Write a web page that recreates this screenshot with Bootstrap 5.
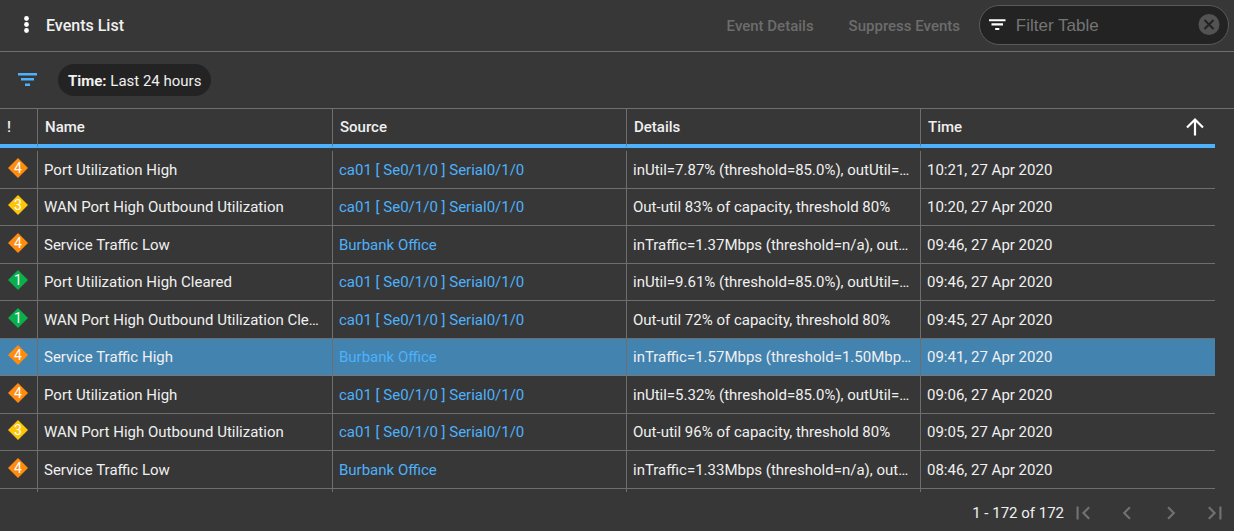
<!DOCTYPE html>
<html lang="en">
<head>
<meta charset="utf-8">
<meta name="viewport" content="width=device-width, initial-scale=1">
<title>Events List</title>
<link href="https://cdn.jsdelivr.net/npm/bootstrap@5.3.0/dist/css/bootstrap.min.css" rel="stylesheet">
<style>
  :root { --line: #6e6e6e; --accent: #4db1fb; --panel: #373737; --well: #232323; }
  body { background: var(--panel); color: #f0f0f0; font-family: Roboto, "Liberation Sans", sans-serif; font-size: 15px; line-height: 20px; }
  .top-bar { height: 52px; border-bottom: 1px solid var(--line); padding: 0 5px 1px 14px; }
  .chip-bar { height: 57px; border-bottom: 1px solid var(--line); padding-left: 15px; }
  .icon-btn { background: none; border: 0; padding: 0; line-height: 0; color: inherit; }
  .title-text { font-size: 16px; font-weight: 500; line-height: 20px; margin-left: 8px; padding-top: 2px; }
  .top-actions { gap: 35px; margin-right: 19px; }
  .action-btn { background: none; border: 0; padding: 2px 0 0; font-size: 15px; font-weight: 500; color: #6c6c6c; }
  .search-pill { width: 250px; height: 40px; background: var(--well); border: 1px solid #5a5a5a; border-radius: 20px; padding: 0 8px 0 9px; }
  .search-pill input { background: none; border: 0; outline: 0; color: #f0f0f0; font-family: "Liberation Sans", sans-serif; font-size: 17px; min-width: 0; padding: 2px 0 0; margin-left: 7px; }
  .search-pill input::placeholder { color: #757575; opacity: 1; }
  .time-chip { height: 32px; border: 0; border-radius: 16px; background: var(--well); color: #f0f0f0; padding: 2px 10px 0; margin-left: 18px; }
  .grid-wrap { padding-right: 19px; }
  .event-table { width: 100%; table-layout: fixed; border-collapse: separate; border-spacing: 0; }
  .event-table th, .event-table td { border-right: 1px solid var(--line); padding: 0 7px 0 6px; overflow: hidden; white-space: nowrap; text-overflow: ellipsis; vertical-align: middle; }
  .event-table th:last-child, .event-table td:last-child { border-right: 0; }
  .event-table th { height: 39px; border-bottom: 4px solid var(--accent); font-weight: 500; padding-left: 7px; }
  .event-table tbody::before { content: ""; display: block; height: 3px; }
  .event-table tbody tr { height: 38px; }
  .event-table tbody tr:nth-child(even) { height: 37px; }
  .event-table tbody td { border-bottom: 1px solid var(--line); }
  .event-table tfoot td { height: 3px; padding: 0; }
  .event-table td.sev { padding: 0 0 4px 8px; line-height: 0; }
  .event-table a { color: var(--accent); text-decoration: none; }
  .event-table .picked td { background: #4383b0; border-bottom-color: #77797b; }
  .sev-col { width: 38px; }
  .name-col { width: 295px; }
  .sev text { font-family: Roboto, sans-serif; font-size: 14px; fill: #fff; text-anchor: middle; }
  .s4 { fill: #ff8c0f; } .s3 { fill: #fdc60b; } .s1 { fill: #09b04c; }
  .pager { padding: 1px 6px 0; height: 40px; }
  .pager-nav { gap: 18px; margin-left: 6px; }
</style>
</head>
<body>
<main class="d-flex flex-column min-vh-100">
  <header class="top-bar d-flex align-items-center">
    <button class="icon-btn" type="button" aria-label="More options">
      <svg width="24" height="24" viewBox="0 0 24 24" fill="#fff"><circle cx="12.500" cy="5.500" r="2.400"/><circle cx="12.500" cy="11.500" r="2.400"/><circle cx="12.500" cy="17.500" r="2.400"/></svg>
    </button>
    <h1 class="title-text mb-0 me-auto">Events List</h1>
    <div class="top-actions d-flex">
      <button class="action-btn" type="button" disabled>Event Details</button>
      <button class="action-btn" type="button" disabled>Suppress Events</button>
    </div>
    <div class="search-pill d-flex align-items-center">
      <svg width="24" height="24" viewBox="0 0 24 24" fill="#fff" aria-hidden="true"><path d="M0 5h20v2.500H0zM3 10h14v2.500H3zM7.500 15.500h5V18h-5z"/></svg>
      <input class="flex-grow-1" type="text" placeholder="Filter Table" aria-label="Filter Table">
      <button class="icon-btn" type="button" aria-label="Clear filter">
        <svg width="22" height="22" viewBox="0 0 22 22"><circle cx="11" cy="10.500" r="10.500" fill="#535353"/><path d="M6.500 6l9 9m0-9l-9 9" stroke="#232323" stroke-width="2"/></svg>
      </button>
    </div>
  </header>

  <section class="chip-bar d-flex align-items-center" aria-label="Active filters">
    <button class="icon-btn" type="button" aria-label="Filters">
      <svg width="25" height="24" viewBox="0 0 25 24" fill="#4db1fb"><path d="M3 5h19v2.500H3zM6 10h13v2.500H6zM10 15.500h5V18h-5z"/></svg>
    </button>
    <button class="time-chip" type="button"><b>Time:</b> Last 24 hours</button>
  </section>

  <div class="grid-wrap">
    <table class="event-table">
      <colgroup><col class="sev-col"><col class="name-col"><col><col><col></colgroup>
      <thead>
        <tr><th scope="col">!</th><th scope="col">Name</th><th scope="col">Source</th><th scope="col">Details</th>
          <th scope="col"><div class="d-flex align-items-center justify-content-between">Time
            <svg width="26" height="22" viewBox="0 0 26 22" fill="none" stroke="#fff" stroke-width="2.200" aria-hidden="true"><path d="M13 19.500V4M5 11.500l8-8 8 8"/></svg></div></th></tr>
      </thead>
      <tbody>
        <tr><td class="sev"><svg width="20" height="20" role="img"><path class="s4" d="M10 0l10 10-10 10L0 10z"/><text x="10" y="15">4</text></svg></td><td>Port Utilization High</td><td><a href="#">ca01 [ Se0/1/0 ] Serial0/1/0</a></td><td>inUtil=7.87% (threshold=85.0%), outUtil=7.87%</td><td>10:21, 27 Apr 2020</td></tr>
        <tr><td class="sev"><svg width="20" height="20" role="img"><path class="s3" d="M10 0l10 10-10 10L0 10z"/><text x="10" y="15">3</text></svg></td><td>WAN Port High Outbound Utilization</td><td><a href="#">ca01 [ Se0/1/0 ] Serial0/1/0</a></td><td>Out-util 83% of capacity, threshold 80%</td><td>10:20, 27 Apr 2020</td></tr>
        <tr><td class="sev"><svg width="20" height="20" role="img"><path class="s4" d="M10 0l10 10-10 10L0 10z"/><text x="10" y="15">4</text></svg></td><td>Service Traffic Low</td><td><a href="#">Burbank Office</a></td><td>inTraffic=1.37Mbps (threshold=n/a), outTra</td><td>09:46, 27 Apr 2020</td></tr>
        <tr><td class="sev"><svg width="20" height="20" role="img"><path class="s1" d="M10 0l10 10-10 10L0 10z"/><text x="10" y="15">1</text></svg></td><td>Port Utilization High Cleared</td><td><a href="#">ca01 [ Se0/1/0 ] Serial0/1/0</a></td><td>inUtil=9.61% (threshold=85.0%), outUtil=9.61%</td><td>09:46, 27 Apr 2020</td></tr>
        <tr><td class="sev"><svg width="20" height="20" role="img"><path class="s1" d="M10 0l10 10-10 10L0 10z"/><text x="10" y="15">1</text></svg></td><td>WAN Port High Outbound Utilization Cleared</td><td><a href="#">ca01 [ Se0/1/0 ] Serial0/1/0</a></td><td>Out-util 72% of capacity, threshold 80%</td><td>09:45, 27 Apr 2020</td></tr>
        <tr class="picked" aria-selected="true"><td class="sev"><svg width="20" height="20" role="img"><path class="s4" d="M10 0l10 10-10 10L0 10z"/><text x="10" y="15">4</text></svg></td><td>Service Traffic High</td><td><a href="#">Burbank Office</a></td><td>inTraffic=1.57Mbps (threshold=1.50Mbps)</td><td>09:41, 27 Apr 2020</td></tr>
        <tr><td class="sev"><svg width="20" height="20" role="img"><path class="s4" d="M10 0l10 10-10 10L0 10z"/><text x="10" y="15">4</text></svg></td><td>Port Utilization High</td><td><a href="#">ca01 [ Se0/1/0 ] Serial0/1/0</a></td><td>inUtil=5.32% (threshold=85.0%), outUtil=5.32%</td><td>09:06, 27 Apr 2020</td></tr>
        <tr><td class="sev"><svg width="20" height="20" role="img"><path class="s3" d="M10 0l10 10-10 10L0 10z"/><text x="10" y="15">3</text></svg></td><td>WAN Port High Outbound Utilization</td><td><a href="#">ca01 [ Se0/1/0 ] Serial0/1/0</a></td><td>Out-util 96% of capacity, threshold 80%</td><td>09:05, 27 Apr 2020</td></tr>
        <tr><td class="sev"><svg width="20" height="20" role="img"><path class="s4" d="M10 0l10 10-10 10L0 10z"/><text x="10" y="15">4</text></svg></td><td>Service Traffic Low</td><td><a href="#">Burbank Office</a></td><td>inTraffic=1.33Mbps (threshold=n/a), outTra</td><td>08:46, 27 Apr 2020</td></tr>
      </tbody>
      <tfoot aria-hidden="true"><tr><td></td><td></td><td></td><td></td><td></td></tr></tfoot>
    </table>
  </div>

  <footer class="pager d-flex align-items-center justify-content-end">
    <span>1 - 172 of 172</span>
    <nav class="pager-nav d-flex" aria-label="Pages">
      <button class="icon-btn" type="button" disabled aria-label="First page"><svg width="26" height="26" viewBox="0 0 24 24" fill="#717171"><path d="M18.410 16.590L13.820 12l4.590-4.590L17 6l-6 6 6 6zM6 6h2v12H6z"/></svg></button>
      <button class="icon-btn" type="button" disabled aria-label="Previous page"><svg width="26" height="26" viewBox="0 0 24 24" fill="#717171"><path d="M15.410 7.410L14 6l-6 6 6 6 1.410-1.410L10.830 12z"/></svg></button>
      <button class="icon-btn" type="button" disabled aria-label="Next page"><svg width="26" height="26" viewBox="0 0 24 24" fill="#717171"><path d="M10 6L8.590 7.410 13.170 12l-4.580 4.590L10 18l6-6z"/></svg></button>
      <button class="icon-btn" type="button" disabled aria-label="Last page"><svg width="26" height="26" viewBox="0 0 24 24" fill="#717171"><path d="M5.590 7.410L10.180 12l-4.590 4.590L7 18l6-6-6-6zM16 6h2v12h-2z"/></svg></button>
    </nav>
  </footer>
</main>
<script src="https://cdn.jsdelivr.net/npm/bootstrap@5.3.0/dist/js/bootstrap.bundle.min.js"></script>
</body>
</html>
